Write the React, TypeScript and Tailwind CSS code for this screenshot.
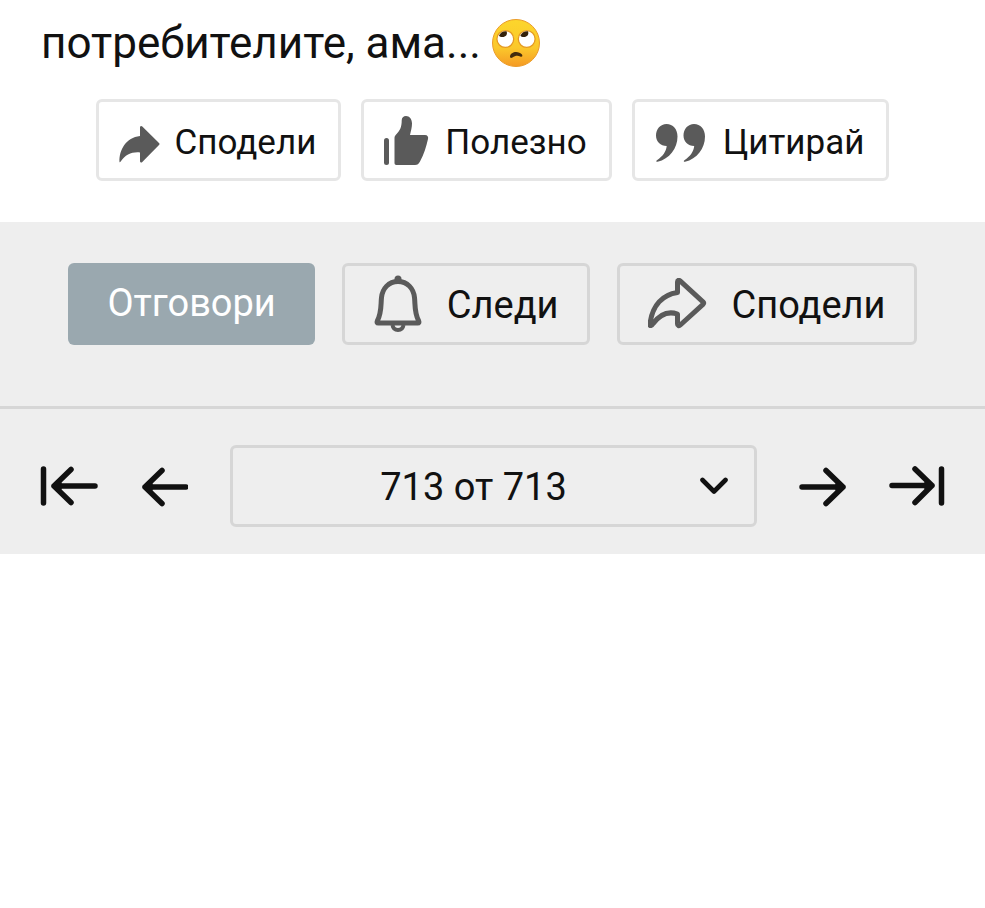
import React, { useState } from 'react';

const TOTAL_PAGES = 713;

function RollingEyes() {
  return (
    <svg width="50" height="50" viewBox="0 0 50 50" role="img" aria-label="🙄">
      <defs>
        <linearGradient id="face" x1="0" y1="0" x2="0" y2="1">
          <stop offset="0" stopColor="#fcd62c" />
          <stop offset="0.6" stopColor="#fbc82b" />
          <stop offset="1" stopColor="#f59a24" />
        </linearGradient>
      </defs>
      <circle cx="25" cy="25" r="23.500" fill="url(#face)" stroke="#eb9c2a" strokeWidth="1" />
      <circle cx="14.300" cy="21" r="8.400" fill="#fff" stroke="#e59a22" strokeWidth="1.300" />
      <circle cx="35.700" cy="21" r="8.400" fill="#fff" stroke="#e59a22" strokeWidth="1.300" />
      <path d="M8 17.500C9.500 14.500 12 13 15.500 13.200 17 16.500 14.500 19 11.500 19 9.800 19 8.500 18.500 8 17.500z" fill="#33210c" />
      <path d="M29.400 17.500C30.900 14.500 33.400 13 36.900 13.200 38.400 16.500 35.900 19 32.900 19 31.200 19 29.900 18.500 29.400 17.500z" fill="#33210c" />
      <path d="M19 38.500C19.500 33 28 32.500 31 36.500 32 38.300 30.800 39.300 29.200 38.500 26.500 37.200 24 37.800 21.500 39.500 20 40.400 18.900 39.800 19 38.500z" fill="#422b0d" />
    </svg>
  );
}

function ShareSolid() {
  return (
    <svg width="42" height="40" viewBox="1 0 42 40" fill="#5a5a5a" aria-hidden="true">
      <path d="M1.500 38C1 26 8 13.500 22 12V3.500c0-1.500 1.300-2 2.300-1L41 19c.7.700.7 1.300 0 2L24.300 38c-1 1-2.300.500-2.300-1v-8.500c-8-.8-14.500 2-19.500 9.300-.4.600-1 .6-1 .2z" />
    </svg>
  );
}

function ThumbUp() {
  return (
    <svg width="47" height="60" viewBox="1 0 47 60" fill="#5a5a5a" aria-hidden="true">
      <rect x="1" y="24" width="5" height="27" rx="2.500" />
      <path d="M11.500 24.500c0-1.600.4-2.800 1.600-4 4-4 5.600-7.500 5.600-14C18.700 3.500 20.500 2 23 2c3.500 0 6 3 6 7.500 0 4-1 7-2 11.500h15c2.500 0 3.600 1.700 3 4-1.800 8-4 15-8 22.500-1.300 2.500-2.500 3.500-5 3.500H13.500c-1.300 0-2-.7-2-2z" />
    </svg>
  );
}

function QuoteMarks() {
  return (
    <svg width="54" height="40" viewBox="1 1 54 40" fill="#5a5a5a" aria-hidden="true">
      <path d="M12.500 1c6.500 0 11 5 11 12.500 0 12-8 22.500-20 25.300-1.300.3-1.600-.8-.6-1.500 6-4 9.300-9 9.800-14.300C6.500 23 2 18.500 2 12.500 2 6 6.500 1 12.500 1z" />
      <path d="M40 1c6.500 0 11 5 11 12.500 0 12-8 22.500-20 25.300-1.300.3-1.600-.8-.6-1.500 6-4 9.300-9 9.800-14.300-6.200 0-10.700-4.500-10.700-10.500C29.500 6 34 1 40 1z" />
    </svg>
  );
}

function Bell() {
  return (
    <svg width="50" height="58" viewBox="-1 0 50 58" fill="none" stroke="#5a5a5a" aria-hidden="true">
      <circle cx="24" cy="4" r="3.500" fill="#5a5a5a" stroke="none" />
      <path d="M24 6.500c9.500 0 15.500 7 16.500 16 .8 7-.3 15 4.200 23.500.6 1.300.2 2-1 2H4.300c-1.200 0-1.600-.7-1-2C7.800 37.500 6.700 29.500 7.500 22.500c1-9 7-16 16.500-16z" strokeWidth="5" strokeLinejoin="round" />
      <path d="M18.500 50c.5 3.300 2.500 5 5.500 5s5-1.700 5.500-5" strokeWidth="4" />
    </svg>
  );
}

function ShareOutline() {
  return (
    <svg width="60" height="52" viewBox="2 1 60 52" fill="none" stroke="#5a5a5a" strokeWidth="5" strokeLinejoin="round" aria-hidden="true">
      <path d="M4 47.500C6 28 17 17.500 31.500 15.500V5c0-1.700 1.400-2.200 2.600-1.100L57 24.800c1 1 1 1.600 0 2.500L34.300 48c-1.300 1.200-2.800.6-2.800-1V37c-9-3-17-.5-24.500 9.700C5.600 48.800 3.800 49.300 4 47.500z" />
    </svg>
  );
}

function PagerIcon({ width, children }: { width: number; children: React.ReactNode }) {
  return (
    <svg width={width} height="42" viewBox={`0 0 ${width} 42`} fill="none" stroke="#111" strokeWidth="5.500" strokeLinecap="round" strokeLinejoin="round" aria-hidden="true">
      {children}
    </svg>
  );
}

function PostAction({ icon, label }: { icon: React.ReactNode; label: string }) {
  return (
    <button type="button" className="flex h-[82px] items-center gap-[14px] rounded-md border-3 border-[#e6e6e6] bg-white pt-[7px] pr-[22px] pl-5 text-[35px]">
      {icon}
      {label}
    </button>
  );
}

function TopicAction({ icon, label }: { icon: React.ReactNode; label: string }) {
  return (
    <button type="button" className="flex h-[82px] items-center gap-6 rounded-md border-3 border-[#d6d6d6] px-7 text-[38px]">
      {icon}
      <span className="pt-[3px]">{label}</span>
    </button>
  );
}

export default function App() {
  const [page, setPage] = useState(TOTAL_PAGES);

  return (
    <div className="min-h-screen bg-white font-['Roboto',sans-serif] text-[#111]">
      <article className="pb-[41px]">
        <p className="flex items-center gap-[10px] px-[41px] pt-[13px] text-[44px] leading-[60px]">
          потребителите, ама... <RollingEyes />
        </p>
        <div className="mt-[26px] flex flex-wrap justify-center gap-5">
          <PostAction icon={<ShareSolid />} label="Сподели" />
          <PostAction icon={<ThumbUp />} label="Полезно" />
          <PostAction icon={<QuoteMarks />} label="Цитирай" />
        </div>
      </article>

      <footer className="bg-[#eee]">
        <div className="flex flex-wrap justify-center gap-[27px] border-b-3 border-[#d6d6d6] pt-[41px] pb-[61px]">
          <button type="button" className="h-[82px] rounded-md bg-[#9aa8af] px-[39px] pb-[2px] text-[38px] text-white">
            Отговори
          </button>
          <TopicAction icon={<Bell />} label="Следи" />
          <TopicAction icon={<ShareOutline />} label="Сподели" />
        </div>

        <nav className="flex items-center gap-[42px] px-10 pt-9 pb-[27px]" aria-label="Страници">
          <button type="button" aria-label="Първа" onClick={() => setPage(1)}>
            <PagerIcon width={58}>
              <path d="M3.500 4v34M55 21H14M31 4.500L14 21l17 16.500M15 21l4-3v6z" />
            </PagerIcon>
          </button>
          <button type="button" aria-label="Предишна" onClick={() => setPage(Math.max(1, page - 1))}>
            <PagerIcon width={48}>
              <path d="M46 22H5M22 5.500L5 22l17 16.500M6 22l4-3v6z" />
            </PagerIcon>
          </button>
          <div className="relative flex-1">
            <select
              aria-label="Страница"
              value={page}
              onChange={(e) => setPage(Number(e.target.value))}
              className="block h-[82px] w-full appearance-none rounded-md border-3 border-[#d6d6d6] bg-[#eee] pt-[3px] pr-10 text-[38px] [text-align-last:center]"
            >
              {Array.from({ length: TOTAL_PAGES }, (_, i) => (
                <option key={i} value={i + 1}>
                  {i + 1} от {TOTAL_PAGES}
                </option>
              ))}
            </select>
            <svg className="pointer-events-none absolute top-8 right-7" width="30" height="18" viewBox="0 0 30 18" fill="none" stroke="#111" strokeWidth="4.600" strokeLinecap="round" strokeLinejoin="round" aria-hidden="true">
              <path d="M3.500 3L15 14.500 26.500 3" />
            </svg>
          </div>
          <button type="button" aria-label="Следваща" onClick={() => setPage(Math.min(TOTAL_PAGES, page + 1))}>
            <PagerIcon width={48}>
              <path d="M3 22h41M27 5.500L44 22 27 38.500M43 22l-4-3v6z" />
            </PagerIcon>
          </button>
          <button type="button" aria-label="Последна" onClick={() => setPage(TOTAL_PAGES)}>
            <PagerIcon width={56}>
              <path d="M3 20.500h40M26 4l17 16.500L26 37.500M42 20.500l-4-3v6zM52.500 4v34" />
            </PagerIcon>
          </button>
        </nav>
      </footer>
    </div>
  );
}
